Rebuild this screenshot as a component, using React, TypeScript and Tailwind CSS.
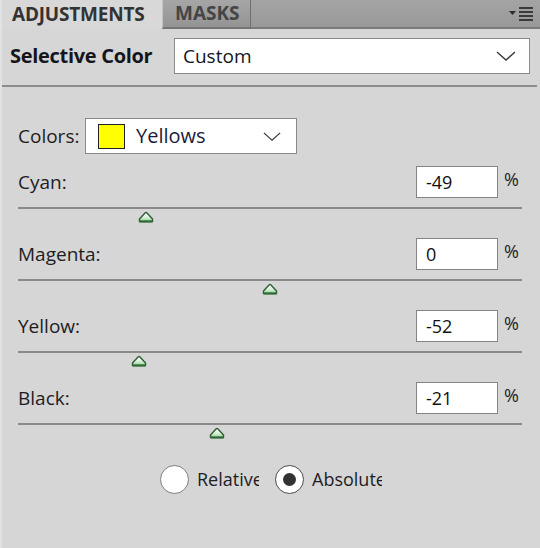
import React from 'react';

const channels = [
  { name: 'Cyan:', value: -49 },
  { name: 'Magenta:', value: 0 },
  { name: 'Yellow:', value: -52 },
  { name: 'Black:', value: -21 },
];

const TRACK_W = 504;

function Chevron({ w = 20, h = 10 }: { w?: number; h?: number }) {
  return (
    <svg width={w} height={h} viewBox="0 0 20 10" fill="none">
      <path d="M1 1 L10 9 L19 1" stroke="#3a3a3a" strokeWidth="1.4" />
    </svg>
  );
}

function Thumb() {
  return (
    <svg width="16" height="12" viewBox="0 0 16 12">
      <defs>
        <linearGradient id="thumbFill" x1="0" y1="0" x2="0" y2="1">
          <stop offset="0" stopColor="#ffffff" />
          <stop offset="0.55" stopColor="#d6efd6" />
          <stop offset="1" stopColor="#8fcf94" />
        </linearGradient>
      </defs>
      <path
        d="M1.5 10.5 L1.5 8 L7 2 Q8 1 9 2 L14.5 8 L14.5 10.5 Z"
        fill="url(#thumbFill)"
        stroke="#2f5e34"
        strokeWidth="1.4"
        strokeLinejoin="round"
      />
      <path d="M1.5 10.5 L14.5 10.5" stroke="#2d6a35" strokeWidth="2" />
    </svg>
  );
}

function ChannelRow({ name, value }: { name: string; value: number }) {
  const center = ((value + 100) / 200) * (TRACK_W - 1);
  return (
    <div className="flex flex-col">
      <div className="flex items-center h-[32px]">
        <span className="flex-1 text-[19px] text-[#1d1d24]">{name}</span>
        <div className="w-[82px] h-[32px] bg-white border border-[#858585] flex items-center pl-[9px] text-[18px] text-[#111]">
          {value}
        </div>
        <span className="ml-[6px] w-[18px] self-start leading-[26px] text-[18px] font-medium text-[#1d1d24]">%</span>
      </div>
      <div className="relative mt-[9px] h-[2px] bg-[#8a8a8a]" style={{ width: TRACK_W }}>
        <div className="absolute top-[4px]" style={{ left: center - 8 }}>
          <Thumb />
        </div>
      </div>
      <div className="h-[29px]" />
    </div>
  );
}

function Radio({ checked, label, width }: { checked: boolean; label: string; width: number }) {
  return (
    <div className="flex items-center">
      <div
        className={`w-[29px] h-[29px] rounded-full bg-white flex items-center justify-center ${
          checked ? 'border-[1.5px] border-[#4a4a4a]' : 'border border-[#7c7c7c]'
        }`}
      >
        {checked && <div className="w-[13px] h-[13px] rounded-full bg-[#333]" />}
      </div>
      <span
        className="ml-[8px] overflow-hidden whitespace-nowrap text-[18px] text-[#1d1d24]"
        style={{ width }}
      >
        {label}
      </span>
    </div>
  );
}

export default function App() {
  return (
    <div
      className="w-[540px] h-[548px] bg-[#d6d6d6] overflow-hidden flex flex-col border-l-2 border-l-[#e2e2e2]"
      style={{ fontFamily: '"Open Sans", "Noto Sans", sans-serif' }}
    >
      {/* Tab bar */}
      <div className="flex h-[29px] bg-gradient-to-b from-[#a4a4a4] to-[#989898]">
        <div className="w-[160px] h-full bg-[#d8d8d8] flex items-center pl-[10px] text-[19px] font-bold text-[#333] tracking-[-0.2px]">
          ADJUSTMENTS
        </div>
        <div className="w-[89px] h-full bg-gradient-to-b from-[#a6a6a6] to-[#949494] border-l border-l-[#c4c4c4] border-r border-r-[#6f6f6f] border-b-2 border-b-[#757575] flex items-center pl-[12px] text-[19px] font-bold text-[#454545]">
          MASKS
        </div>
        <div className="flex-1 h-full border-b-2 border-b-[#7a7a7a] flex items-center justify-end pr-[5px]">
          <svg width="26" height="16" viewBox="0 0 26 16">
            <path d="M0 5 L7 5 L3.5 9 Z" fill="#2e2e2e" />
            <rect x="10" y="1" width="14" height="2" fill="#3a3a3a" />
            <rect x="10" y="5" width="14" height="2" fill="#3a3a3a" />
            <rect x="10" y="9" width="14" height="2" fill="#3a3a3a" />
            <rect x="10" y="13" width="14" height="2" fill="#3a3a3a" />
          </svg>
        </div>
      </div>

      {/* Preset header */}
      <div className="flex items-center pt-[9px] pb-[11px]">
        <span className="w-[172px] pl-[8px] text-[20px] font-bold text-[#15151c] tracking-[-0.3px]">
          Selective Color
        </span>
        <div className="w-[356px] h-[36px] bg-white border border-[#8a8a8a] flex items-center justify-between pl-[8px] pr-[13px]">
          <span className="text-[19px] text-[#15151c]">Custom</span>
          <Chevron />
        </div>
      </div>
      <div className="w-[535px] h-[2px] bg-[#8c8c8c]" />

      {/* Body */}
      <div className="flex flex-col pl-[16px] pt-[31px]">
        <div className="flex items-center">
          <span className="w-[67px] text-[19px] text-[#1d1d24]">Colors:</span>
          <div className="w-[212px] h-[36px] bg-white border border-[#8a8a8a] flex items-center pl-[12px] pr-[15px]">
            <div className="w-[27px] h-[25px] bg-[#ffff00] border-[1.5px] border-[#222]" />
            <span className="ml-[11px] flex-1 text-[20px] text-[#1c1c3a]">Yellows</span>
            <Chevron w={18} h={9} />
          </div>
        </div>
        <div className="h-[12px]" />
        <div className="pr-[18px]">
          {channels.map((c) => (
            <ChannelRow key={c.name} name={c.name} value={c.value} />
          ))}
        </div>
        <div className="flex items-center pl-[142px] mt-[11px] gap-[16px]">
          <Radio checked={false} label="Relative" width={62} />
          <Radio checked label="Absolute" width={70} />
        </div>
      </div>
    </div>
  );
}
